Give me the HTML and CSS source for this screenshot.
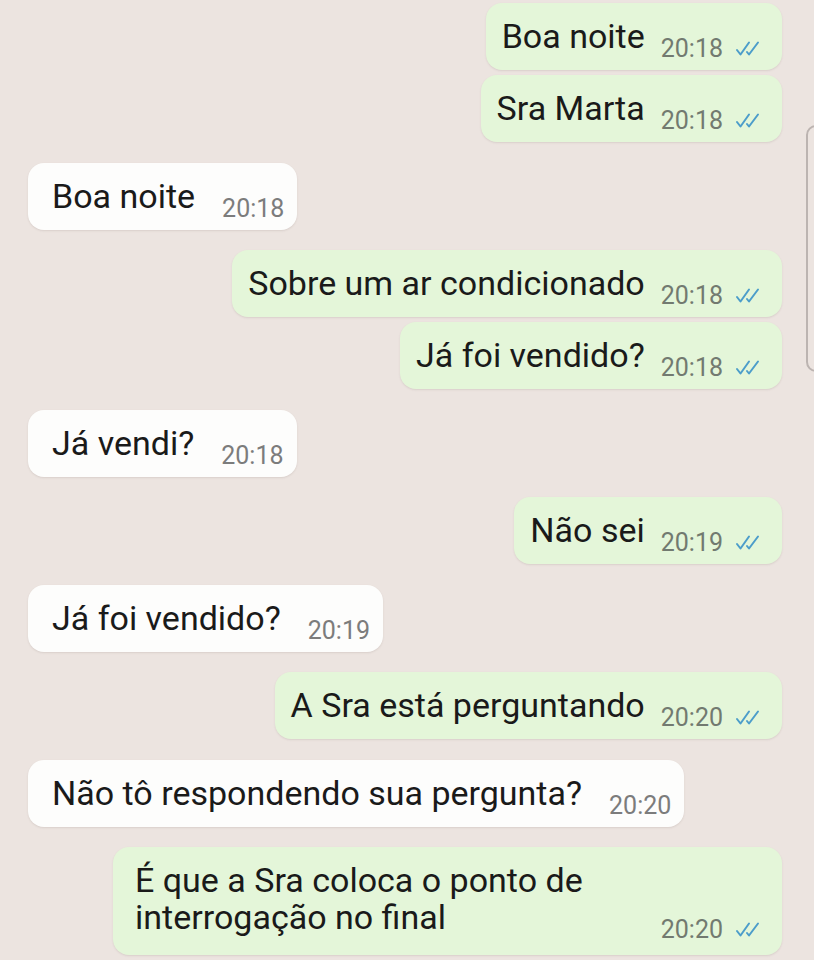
FILE: index.html
```html
<!DOCTYPE html>
<html lang="pt">
<head>
<meta charset="utf-8">
<title>Chat</title>
<link rel="stylesheet" href="styles.css">
</head>
<body>
<div class="chat">
  <div class="msg out"><span class="text">Boa noite</span><span class="meta"><span class="time">20:18</span><svg class="ticks" viewBox="0 0 30 15"><path d="M4 9 L7.5 13.5 L16 1.5 M14 11 L16 13.5 L25 1.5"/></svg></span></div>
  <div class="msg out"><span class="text">Sra Marta</span><span class="meta"><span class="time">20:18</span><svg class="ticks" viewBox="0 0 30 15"><path d="M4 9 L7.5 13.5 L16 1.5 M14 11 L16 13.5 L25 1.5"/></svg></span></div>
  <div class="msg in"><span class="text">Boa noite</span><span class="meta"><span class="time">20:18</span></span></div>
  <div class="msg out"><span class="text">Sobre um ar condicionado</span><span class="meta"><span class="time">20:18</span><svg class="ticks" viewBox="0 0 30 15"><path d="M4 9 L7.5 13.5 L16 1.5 M14 11 L16 13.5 L25 1.5"/></svg></span></div>
  <div class="msg out"><span class="text">Já foi vendido?</span><span class="meta"><span class="time">20:18</span><svg class="ticks" viewBox="0 0 30 15"><path d="M4 9 L7.5 13.5 L16 1.5 M14 11 L16 13.5 L25 1.5"/></svg></span></div>
  <div class="msg in"><span class="text">Já vendi?</span><span class="meta"><span class="time">20:18</span></span></div>
  <div class="msg out"><span class="text">Não sei</span><span class="meta"><span class="time">20:19</span><svg class="ticks" viewBox="0 0 30 15"><path d="M4 9 L7.5 13.5 L16 1.5 M14 11 L16 13.5 L25 1.5"/></svg></span></div>
  <div class="msg in"><span class="text">Já foi vendido?</span><span class="meta"><span class="time">20:19</span></span></div>
  <div class="msg out"><span class="text">A Sra está perguntando</span><span class="meta"><span class="time">20:20</span><svg class="ticks" viewBox="0 0 30 15"><path d="M4 9 L7.5 13.5 L16 1.5 M14 11 L16 13.5 L25 1.5"/></svg></span></div>
  <div class="msg in"><span class="text">Não tô respondendo sua pergunta?</span><span class="meta"><span class="time">20:20</span></span></div>
  <div class="msg out wide"><span class="text">É que a Sra coloca o ponto de interrogação no final</span><span class="meta"><span class="time">20:20</span><svg class="ticks" viewBox="0 0 30 15"><path d="M4 9 L7.5 13.5 L16 1.5 M14 11 L16 13.5 L25 1.5"/></svg></span></div>
</div>
<div class="scroll-thumb"></div>
</body>
</html>
```
FILE: styles.css
```css
html, body {
  margin: 0;
  padding: 0;
  background: #ece4e0;
  height: 100%;
  overflow: hidden;
}

body {
  font-family: Roboto, "Noto Sans", "Liberation Sans", sans-serif;
  color: #1a1a1a;
}

.chat {
  display: flex;
  flex-direction: column;
  padding-top: 3px;
}

.msg {
  display: flex;
  align-items: flex-end;
  max-width: 669px;
  box-sizing: border-box;
  border-radius: 16px;
  box-shadow: 0 1px 2px rgba(120, 100, 95, 0.16);
}

.out {
  align-self: flex-end;
  margin-right: 32px;
  background: #e4f6d9;
  padding: 15px 19px 15px 16px;
}

.in {
  align-self: flex-start;
  margin-left: 28px;
  background: #fdfdfc;
  padding: 15px 13px 15px 24px;
}

.out + .out,
.in + .in {
  margin-top: 5px;
}

.out + .in,
.in + .out {
  margin-top: 20.5px;
}

.wide {
  padding-left: 22px;
  padding-bottom: 19px;
}

.text {
  font-size: 34px;
  line-height: 37px;
  color: #1a1a1a;
}

.meta {
  display: flex;
  align-items: center;
  flex-shrink: 0;
  white-space: nowrap;
  font-size: 25px;
  line-height: 25px;
  margin-left: 16px;
  margin-bottom: -6px;
}

.in .meta {
  margin-left: 27px;
}

.time {
  color: #727a70;
}

.in .time {
  color: #7c7c7c;
}

.ticks {
  width: 30px;
  height: 15px;
  margin-left: 10px;
  fill: none;
  stroke: #4c9dca;
  stroke-width: 2;
  stroke-linecap: round;
  stroke-linejoin: round;
}

.scroll-thumb {
  position: absolute;
  left: 806px;
  top: 125px;
  width: 20px;
  height: 247px;
  border: 2px solid #bcb4b1;
  border-radius: 10px;
  box-sizing: border-box;
}
```
